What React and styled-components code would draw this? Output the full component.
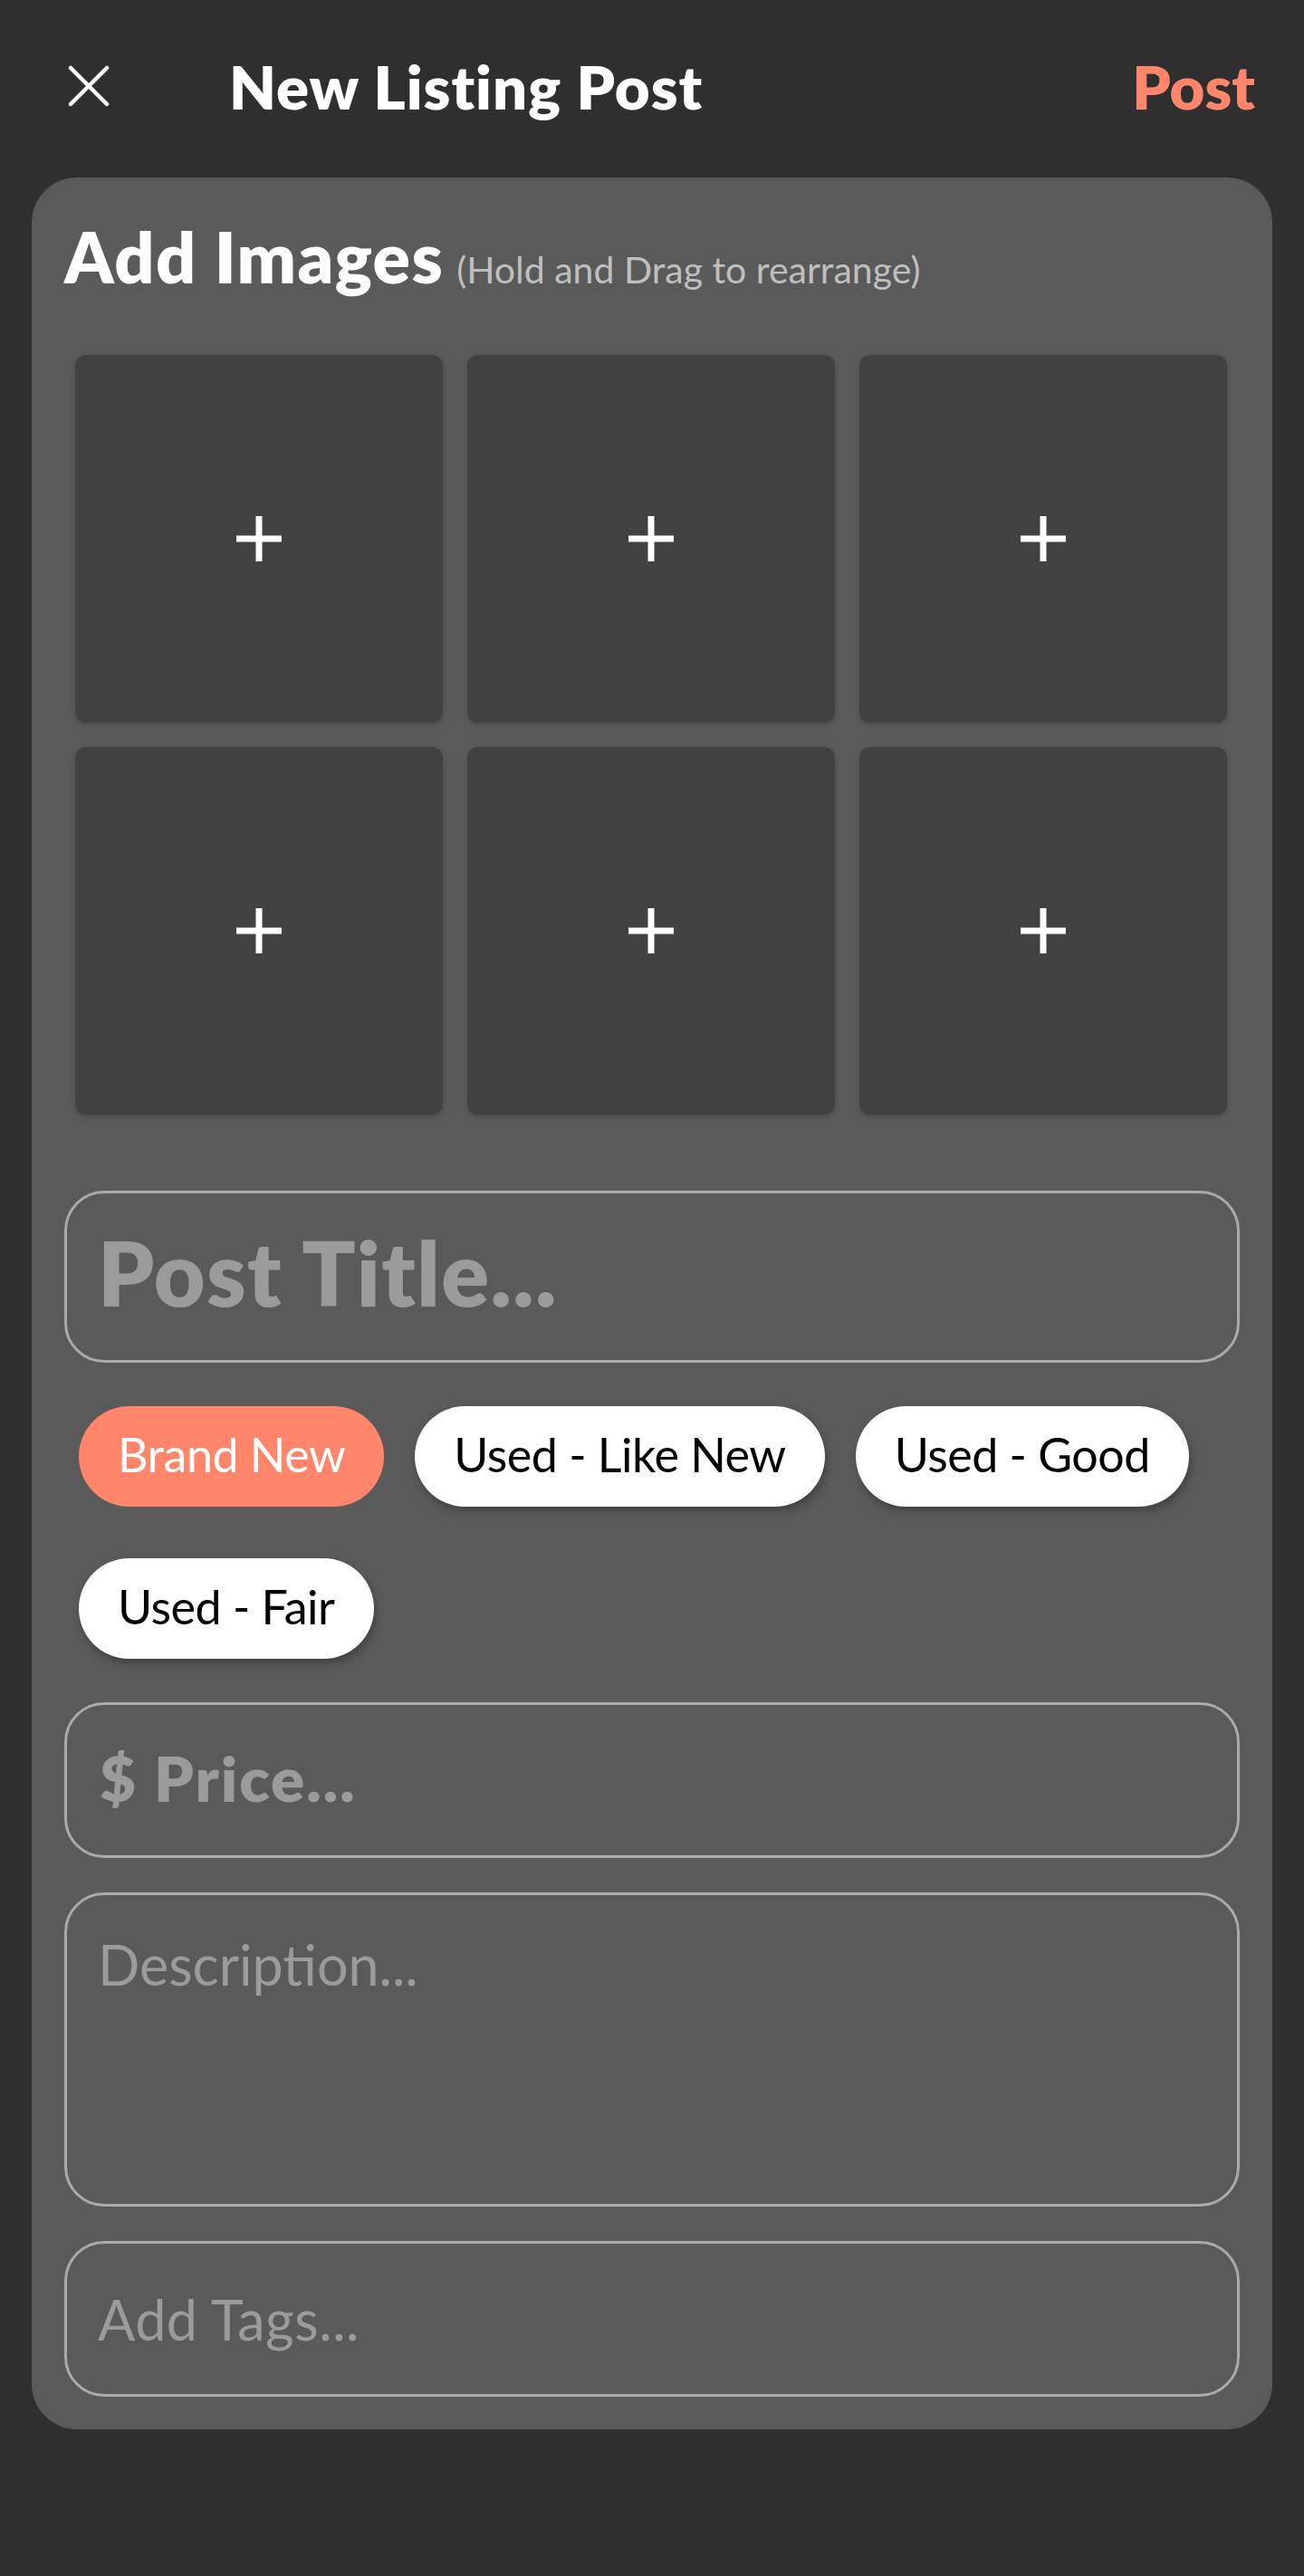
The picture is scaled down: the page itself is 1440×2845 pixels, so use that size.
import React from "react";
import styled, { createGlobalStyle, css } from "styled-components";

const GlobalStyle = createGlobalStyle`
  html, body {
    margin: 0;
    padding: 0;
    background: #2f2f2f;
  }
  body {
    font-family: Lato, "Noto Sans", "Liberation Sans", sans-serif;
    -webkit-font-smoothing: antialiased;
  }
  * { box-sizing: border-box; }
`;

const Page = styled.div`
  min-height: 2845px;
  background: #2f2f2f;
  display: flex;
  flex-direction: column;
`;

const Header = styled.header`
  height: 196px;
  padding: 0 54px 6px 75px;
  display: flex;
  align-items: center;
`;

const CloseButton = styled.button`
  width: 46px;
  height: 46px;
  padding: 0;
  border: none;
  background: none;
  display: flex;
  align-items: center;
  justify-content: center;
  cursor: pointer;
`;

const HeaderTitle = styled.h1`
  flex: 1;
  margin: 0 0 0 132px;
  font-size: 67px;
  font-weight: 800;
  letter-spacing: 1px;
  line-height: 1.2;
  color: #ffffff;
`;

const PostButton = styled.button`
  border: none;
  background: none;
  padding: 0;
  font-family: inherit;
  font-size: 67px;
  font-weight: 800;
  line-height: 1.2;
  color: #ff866a;
  cursor: pointer;
`;

const Card = styled.main`
  margin: 0 35px;
  background: #5a5a5a;
  border-radius: 50px;
  padding: 41px 36px 36px;
  display: flex;
  flex-direction: column;
`;

const SectionHeading = styled.h2`
  margin: 0;
  font-size: 77px;
  font-weight: 800;
  letter-spacing: 1.4px;
  line-height: 1.2;
  color: #ffffff;
  white-space: nowrap;
`;

const Hint = styled.span`
  margin-left: 14px;
  font-size: 41px;
  font-weight: 400;
  letter-spacing: 0;
  color: #bfbfbf;
`;

const ImageGrid = styled.div`
  margin: 63px 12px 0;
  display: grid;
  grid-template-columns: repeat(3, 406px);
  grid-auto-rows: 406px;
  gap: 27px;
`;

const ImageSlot = styled.button`
  border: none;
  padding: 0;
  background: #414141;
  border-radius: 12px;
  box-shadow: 0 2px 5px rgba(0, 0, 0, 0.18);
  display: flex;
  align-items: center;
  justify-content: center;
  cursor: pointer;
`;

const fieldBase = css`
  display: block;
  width: 100%;
  margin: 0;
  border: 3px solid #aaaaaa;
  border-radius: 44px;
  background: transparent;
  color: #ffffff;
  font-family: inherit;
  outline: none;
  &::placeholder {
    color: #9b9b9b;
    opacity: 1;
  }
`;

const sizes = {
  title: css`
    height: 190px;
    margin-top: 84px;
    padding: 0 34px 10px;
    font-size: 98px;
    font-weight: 800;
    letter-spacing: 1.4px;
  `,
  price: css`
    height: 172px;
    margin-top: 48px;
    padding: 0 36px 6px;
    font-size: 69px;
    font-weight: 800;
    letter-spacing: 2px;
  `,
  tags: css`
    height: 172px;
    margin-top: 38px;
    padding: 0 34px;
    font-size: 61px;
    font-weight: 400;
    letter-spacing: 0.5px;
  `,
};

const TextField = styled.input`
  ${fieldBase}
  ${(p) => sizes[p.$size]}
`;

const TextArea = styled.textarea`
  ${fieldBase}
  height: 347px;
  margin-top: 38px;
  padding: 40px 34px;
  font-size: 61px;
  font-weight: 400;
  line-height: 1.2;
  resize: none;
`;

const ChipRow = styled.div`
  margin-top: 48px;
  padding: 0 16px;
  display: flex;
  flex-wrap: wrap;
  gap: 57px 34px;
`;

const Chip = styled.button`
  height: 111px;
  padding: 0 43px 6px;
  border: none;
  border-radius: 56px;
  font-family: inherit;
  font-size: 52px;
  font-weight: 400;
  letter-spacing: -0.5px;
  white-space: nowrap;
  cursor: pointer;
  background: ${(p) => (p.$active ? "#ff866a" : "#ffffff")};
  color: ${(p) => (p.$active ? "#ffffff" : "#000000")};
  box-shadow: ${(p) =>
    p.$active ? "none" : "2px 5px 8px rgba(0, 0, 0, 0.28)"};
`;

const CloseIcon = () => (
  <svg width="46" height="46" viewBox="0 0 46 46" fill="none">
    <path
      d="M3 3 L43 43 M43 3 L3 43"
      stroke="#ffffff"
      strokeWidth="4.5"
      strokeLinecap="round"
    />
  </svg>
);

const PlusIcon = () => (
  <svg width="50" height="50" viewBox="0 0 50 50">
    <rect x="21.5" y="0" width="7" height="50" fill="#ffffff" />
    <rect x="0" y="21.5" width="50" height="7" fill="#ffffff" />
  </svg>
);

const conditions = ["Brand New", "Used - Like New", "Used - Good", "Used - Fair"];

export default function App() {
  const [condition, setCondition] = React.useState("Brand New");
  return (
    <Page>
      <GlobalStyle />
      <Header>
        <CloseButton aria-label="Close">
          <CloseIcon />
        </CloseButton>
        <HeaderTitle>New Listing Post</HeaderTitle>
        <PostButton>Post</PostButton>
      </Header>
      <Card>
        <SectionHeading>
          Add Images<Hint>(Hold and Drag to rearrange)</Hint>
        </SectionHeading>
        <ImageGrid>
          {Array.from({ length: 6 }).map((_, i) => (
            <ImageSlot key={i} aria-label="Add image">
              <PlusIcon />
            </ImageSlot>
          ))}
        </ImageGrid>
        <TextField $size="title" placeholder="Post Title..." />
        <ChipRow>
          {conditions.map((c) => (
            <Chip
              key={c}
              $active={c === condition}
              onClick={() => setCondition(c)}
            >
              {c}
            </Chip>
          ))}
        </ChipRow>
        <TextField $size="price" placeholder="$ Price..." />
        <TextArea placeholder="Description..." />
        <TextField $size="tags" placeholder="Add Tags..." />
      </Card>
    </Page>
  );
}
